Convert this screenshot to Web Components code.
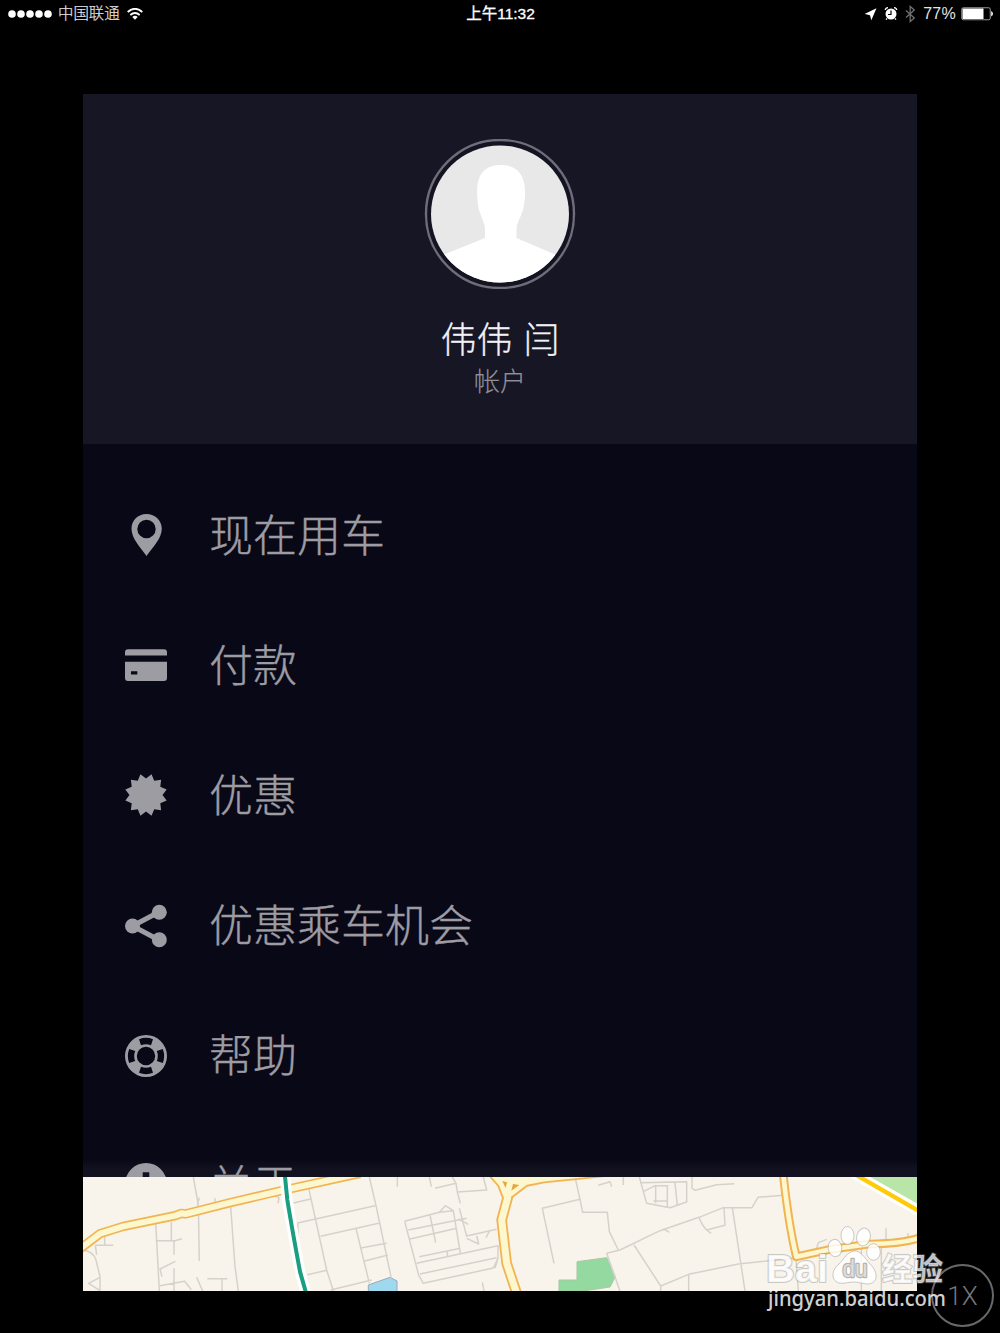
<!DOCTYPE html>
<html lang="zh-CN">
<head>
<meta charset="UTF-8">
<title>菜单</title>
<style>
  html, body { margin: 0; height: 100%; overflow: hidden; background: #000; }
  body { font-family: "Liberation Sans", "Noto Sans CJK SC", sans-serif; }
</style>
</head>
<body>
<side-app></side-app>

<script>
const icons = {
  pin: `<path fill-rule="evenodd" d="M21.500 0C12.800 0 6.500 6.500 6.500 14.800C6.500 24.500 15.500 33.500 21.500 42C27.500 33.500 36.800 24.500 36.800 14.800C36.800 6.500 30.200 0 21.500 0ZM21.500 5.800A9.200 9.200 0 1 1 21.500 24.200A9.200 9.200 0 1 1 21.500 5.800Z"/>`,
  card: `<path fill-rule="evenodd" d="M0 11.500V8.200Q0 5.300 3 5.300H39Q42 5.300 42 8.200V11.500ZM0 17.800H42V34Q42 37 39 37H3Q0 37 0 34ZM6 27.200V30.500H12.300V27.200Z"/>`,
  share: `<path d="M34 7L7.500 21L34 35" fill="none" stroke="currentColor" stroke-width="5"/><circle cx="7.500" cy="21" r="7.500"/><circle cx="34.300" cy="7.300" r="7.500"/><circle cx="34.300" cy="34.700" r="7.500"/>`,
  info: `<path fill-rule="evenodd" d="M21 -1A21 21 0 1 0 21 41A21 21 0 1 0 21 -1ZM17.700 8.300H24.300V13.800H17.700ZM17.700 17H24.300V32H17.700Z"/>`,
};

function burst(count) {
  return Array.from({ length: count * 2 }, (_, i) => {
    const r = i % 2 ? 21.4 : 16.5;
    const a = (i * Math.PI) / count;
    return `${(21 + r * Math.sin(a)).toFixed(2)},${(21 - r * Math.cos(a)).toFixed(2)}`;
  }).join(" ");
}

icons.badge = `<polygon points="${burst(12)}"/>`;

// life ring: a disc, a hole and four curved windows
icons.ring = `
  <path fill-rule="evenodd" d="M21 0A21 21 0 1 0 21 42A21 21 0 1 0 21 0ZM21 11.800A9.200 9.200 0 1 1 21 30.200A9.200 9.200 0 1 1 21 11.800Z"/>
  <g fill="var(--menu-bg)">${[0, 90, 180, 270].map((a) =>
    `<path transform="rotate(${a} 21 21)" d="M14 4.200Q21 1.500 28 4.200L26 10.200Q21 8.200 16 10.200Z"/>`).join("")}</g>`;

class BaseElement extends HTMLElement {
  connectedCallback() {
    if (!this.shadowRoot) this.attachShadow({ mode: "open" });
    this.shadowRoot.innerHTML = `<style>${this.css()}</style>${this.html()}`;
  }
}

class StatusBar extends BaseElement {
  css = () => /*css*/ `
    :host {
      display: grid;
      grid-template-columns: 1fr auto 1fr;
      align-items: center;
      height: 27px;
      padding: 0 7px 0 8px;
      color: #e4e4e4;
      font-size: 15.5px;
      line-height: 27px;
      white-space: nowrap;
    }
    div { display: flex; align-items: center; }
    svg { display: block; }
    .carrier { margin: 0 7px 0 6px; font-size: 15.4px; font-weight: 300; -webkit-text-stroke: .2px; }
    .time { font-size: 15.5px; font-weight: 400; color: #fff; -webkit-text-stroke: .3px #fff; }
    .right { justify-content: flex-end; }
    .percent { margin: 0 5px 0 7px; font-size: 16px; letter-spacing: .25px; }
  `;
  html = () => /*html*/ `
    <div>
      <svg width="44" height="8" fill="#fff"><circle cx="4" cy="4" r="3.800"/><circle cx="13" cy="4" r="3.800"/><circle cx="22" cy="4" r="3.800"/><circle cx="31" cy="4" r="3.800"/><circle cx="40" cy="4" r="3.800"/></svg>
      <span class="carrier">中国联通</span>
      <svg width="16" height="12" viewBox="0 0 16 12" fill="none" stroke="#fff" stroke-width="1.900"><path d="M.700 4Q8-2.300 15.300 4M3.300 7Q8 2.900 12.700 7"/><path d="M5.300 9Q8 6.600 10.700 9L8 11.800Z" fill="#fff" stroke="none"/></svg>
    </div>
    <div class="time">上午11:32</div>
    <div class="right">
      <svg width="51" height="18" viewBox="0 0 51 18">
        <path d="M11.500 3.200L-.500 9L5 10.200L6.300 15.200Z" fill="#fff"/>
        <circle cx="26" cy="9" r="5.500" fill="#fff"/>
        <path d="M20.300 5Q20.500 3 23 2.700M29 2.700Q31.500 3 31.700 5M22 13.500L21 14.700M30 13.500L31 14.700" stroke="#fff" stroke-width="1.300" fill="none"/>
        <path d="M26 5.500V9.500H23" fill="none" stroke="#000" stroke-width="1.200"/>
        <path d="M41 5.500L49.300 13L45.200 16.500V1.500L49.300 5L41 12.500" fill="none" stroke="#707070" stroke-width="1.300"/>
      </svg>
      <span class="percent">77%</span>
      <svg width="32" height="14" viewBox="0 0 32 14"><rect x=".750" y=".750" width="28.500" height="12" rx="1.500" fill="none" stroke="#999"/><rect x="1.500" y="1.500" width="21" height="10.500" fill="#fff"/><path d="M30.200 4Q32 5 32 6.800T30.200 9.600Z" fill="#fff"/></svg>
    </div>
  `;
}

class ProfileHeader extends BaseElement {
  css = () => /*css*/ `
    :host {
      display: flex;
      flex-direction: column;
      align-items: center;
      box-sizing: border-box;
      height: 350px;
      padding-top: 45px;
      background: #171625;
    }
    svg { display: block; }
    .name { margin-top: 22px; font: 300 36px/52px "Noto Sans CJK SC", sans-serif; word-spacing: 3px; color: #f2f2f4; -webkit-text-stroke: .3px; }
    .account { margin-top: -1px; font: 300 26px/36px "Noto Sans CJK SC", sans-serif; color: #908f99; -webkit-text-stroke: .2px; }
  `;
  html = () => /*html*/ `
    <svg width="152" height="150" viewBox="0 0 152 150">
      <clipPath id="face"><ellipse cx="76" cy="75" rx="69" ry="68.500"/></clipPath>
      <circle cx="76" cy="75" r="74" fill="#141322" stroke="#6e6d78" stroke-width="2.400"/>
      <g clip-path="url(#face)">
        <path fill="#e8e8e8" d="M0 0H152V150H0Z"/>
        <path fill="#fff" d="M61 99V91C61 83 57 79 54.500 69C50.500 45 54 26 76.500 26C100 26 104 46 99.500 69C97 79 92.500 83 92.500 91V99L131 115.500V150H20V115.500Z"/>
      </g>
    </svg>
    <div class="name"><slot name="name"></slot></div>
    <div class="account"><slot name="account"></slot></div>
  `;
}

class MenuItem extends BaseElement {
  css = () => /*css*/ `
    :host {
      display: flex;
      align-items: center;
      gap: 42px;
      height: 130.200px;
      padding-left: 42px;
      color: #9d9ca3;
      font: 300 44px/64px "Noto Sans CJK SC", sans-serif;
    }
    svg { flex: none; overflow: visible; }
    span { padding-bottom: 5px; -webkit-text-stroke: .4px; }
  `;
  html = () => /*html*/ `
    <svg width="42" height="42" viewBox="0 0 42 42" fill="currentColor">${icons[this.getAttribute("icon")]}</svg>
    <span><slot></slot></span>
  `;
}

class MenuList extends BaseElement {
  css = () => /*css*/ `
    :host {
      --menu-bg: #090817;
      display: block;
      box-sizing: border-box;
      height: 733px;
      padding-top: 26px;
      overflow: hidden;
      background: linear-gradient(transparent 715px, #12111f 725px), var(--menu-bg);
    }
    ::slotted(:last-child) { margin-top: -1px; }
  `;
  html = () => `<slot></slot>`;
}

class StreetMap extends BaseElement {
  css = () => /*css*/ `
    :host { display: block; height: 114px; background: #f8f4ec; }
    svg { display: block; }
  `;
  html = () => /*html*/ `
    <svg width="834" height="114" viewBox="9 81 2502 342" fill="none" stroke-linejoin="round">
      <g id="areas">
        <path d="M865 405L930 382L951 393V430H865Z" fill="#9fd9f0" stroke="#98aaba" stroke-width="3"/>
        <path d="M1437 423V390H1491V335L1580 323L1606 380L1590 411L1510 423Z" fill="#94daa0" stroke="#a5c9a0" stroke-width="3"/>
        <path d="M2370 81H2511V160Z" fill="#b9e5a9"/>
      </g>
      <g stroke="#d5d2cb" stroke-width="4.500">
        <path d="M340 81L355 165L358 333M227 215L238 423M274 215V272M227 272H285L306 266M282 272V314M452 170L465 350L475 423M74 258V286M46 286H100M10 300Q40 305 48 330L60 380V423M46 286L50 314M60 382L26 400L60 422M286 334L240 357L246 380M282 355V423M240 407L314 394L334 419M350 382L368 423M382 386H442M426 386V423M405 145V156M358 143L352 165M580 136L597 143L594 160"/>
        <path d="M685 110L740 360L760 423M640 159L692 147M655 265L653 219L885 167M722 259L896 220M868 81L888 167L934 385M828 235L868 400M842 294L920 280M854 333L924 315M682 374L740 361M752 420L875 390"/>
        <path d="M952 81V110M1048 81L1054 110M1065 115L1128 100L1117 81M1128 100L1132 126L1220 120L1210 81M1132 126L1141 160M974 214L1078 187L1120 182L1141 310M974 214L1016 375L1030 400L1240 354L1254 325M985 240L1160 205M990 267L1130 235M1050 195L1067 278M1078 187L1096 167L1120 182M1138 175L1160 258L1250 238M1135 207L1165 223M1160 265L1196 282L1190 258M1230 240L1218 263M1018 320L1141 295M1010 340L1254 287L1254 325L1245 354M1020 372L1250 323M1102 302V320M1207 397L1212 423"/>
        <path d="M1422 340L1387 175L1500 148L1487 90M1500 148L1508 187H1582L1588 245L1615 300M1555 106L1590 95L1595 110M1630 81V105M1678 81L1700 160L1770 173L1820 156V95L1680 98M1690 125L1725 107H1765M1727 107V160M1762 107V173M1785 98L1792 168M1720 153H1762M1580 310L1620 300L1740 242L1857 202L1930 173H2016L2034 142L2110 136M1580 310L1620 423M1662 285L1742 408L1826 373L1975 342L2140 325M1826 373V423M1742 408V423M1836 81V115L1846 121L1910 104L1963 101M1857 202Q1865 225 1880 240L1935 226L1932 173M1750 236L1768 247M1880 240L1893 250M1957 173L1995 423M2148 325L2155 423M2210 295L2215 278L2240 268M2418 235V270M2484 250V275M2404 290V423M2344 285V423"/>
      </g>
      <g stroke="#f1b451" stroke-width="28"><path d="M-10 304L60 251L130 229L286 197L304 190L316 192L450 158L600 123L840 70"/><path d="M1235 65L1266 100L1283 143L1265 210L1280 340L1310 430M1283 135L1335 95L1390 84L1480 75L1600 62" stroke-width="32"/><path d="M2109 65Q2125 220 2149 320L2245 299L2370 282Q2470 281 2520 263" stroke-width="26"/></g>
      <g stroke="#fdf7cf" stroke-width="18"><path d="M-10 304L60 251L130 229L286 197L304 190L316 192L450 158L600 123L840 70"/><path d="M1235 65L1266 100L1283 143L1265 210L1280 340L1310 430M1283 135L1335 95L1390 84L1480 75L1600 62" stroke-width="21"/><path d="M2109 65Q2125 220 2149 320L2245 299L2370 282Q2470 281 2520 263" stroke-width="14"/></g>
      <path d="M1245 78L1272 122L1290 132L1320 112L1345 98L1400 84V78Z" fill="#fdf7cf"/>
      <path d="M1267 93L1281 97L1277 114ZM1299 102L1318 105L1294 122Z" fill="#e9a53b"/>
      <path d="M613 60L622 150Q635 230 660 365L680 435" stroke="#fff" stroke-width="32"/>
      <path d="M613 60L622 150Q635 230 660 365L680 435" stroke="#199f80" stroke-width="12"/>
      <path d="M2320 70L2525 188" stroke="#fff" stroke-width="31"/>
      <path d="M2320 70L2525 188" stroke="#ffcb08" stroke-width="13"/>
    </svg>
  `;
}

class ZoomBadge extends BaseElement {
  css = () => /*css*/ `
    :host {
      position: absolute;
      left: 931px;
      top: 1264px;
      display: grid;
      place-items: center;
      box-sizing: border-box;
      width: 63px;
      height: 63px;
      border: 2px solid #68676c;
      border-radius: 50%;
      color: #77767a;
      font: 300 26px/1 Roboto, sans-serif;
    }
  `;
  html = () => `<span><slot></slot></span>`;
}

class PawWatermark extends BaseElement {
  css = () => /*css*/ `
    :host { position: absolute; left: 760px; top: 1220px; display: block; }
    svg { display: block; }
    text { paint-order: stroke; stroke: rgba(130, 130, 130, .4); stroke-width: 2px; stroke-linejoin: round; }
    .url { stroke: none; }
  `;
  html = () => /*html*/ `
    <svg width="195" height="100" viewBox="760 1220 195 100" fill="#fff" fill-opacity=".84">
      <text x="766" y="1282" font-family="Liberation Sans" font-weight="700" font-size="39" textLength="62" lengthAdjust="spacingAndGlyphs">Bai</text>
      <g stroke="#999" stroke-opacity=".5">
        <ellipse cx="847.500" cy="1235.500" rx="6.500" ry="9"/><ellipse cx="863.500" cy="1237" rx="6.800" ry="9" transform="rotate(12 863.500 1237)"/>
        <ellipse cx="835" cy="1248" rx="6.800" ry="8.700" transform="rotate(-8 835 1248)"/><ellipse cx="873.500" cy="1252" rx="6.800" ry="8.300"/>
        <path d="M854 1251C860 1250 865 1258 870 1264C877 1270 880 1283 868 1284C862 1284 860 1282 854 1282S845 1284 839 1283C830 1280 832 1269 839 1264C844 1259 847 1252 854 1251Z"/>
      </g>
      <text x="842.500" y="1277" font-family="Liberation Sans" font-size="23" textLength="25" lengthAdjust="spacingAndGlyphs" style="fill:#e9e8e5;stroke:#b5b4b1;stroke-width:2.500px">du</text>
      <text x="882" y="1280" font-family="Noto Sans CJK SC" font-weight="700" font-size="31" textLength="61" lengthAdjust="spacingAndGlyphs" fill-opacity=".76">经验</text>
      <text class="url" x="768" y="1305.500" font-family="Noto Sans" font-weight="500" font-size="21" textLength="178" lengthAdjust="spacingAndGlyphs">jingyan.baidu.com</text>
    </svg>
  `;
}

class SideApp extends BaseElement {
  css = () => /*css*/ `
    :host { display: block; height: 1333px; background: #000; }
    main { display: flex; flex-direction: column; margin: 67px 83px 0; }
  `;
  html = () => /*html*/ `
    <status-bar></status-bar>
    <main>
      <profile-header>
        <span slot="name">伟伟 闫</span>
        <span slot="account">帐户</span>
      </profile-header>
      <menu-list>
        <menu-item icon="pin">现在用车</menu-item>
        <menu-item icon="card">付款</menu-item>
        <menu-item icon="badge">优惠</menu-item>
        <menu-item icon="share">优惠乘车机会</menu-item>
        <menu-item icon="ring">帮助</menu-item>
        <menu-item icon="info">关于</menu-item>
      </menu-list>
      <street-map></street-map>
    </main>
    <zoom-badge>1X</zoom-badge>
    <paw-watermark></paw-watermark>
  `;
}

customElements.define("status-bar", StatusBar);
customElements.define("profile-header", ProfileHeader);
customElements.define("menu-item", MenuItem);
customElements.define("menu-list", MenuList);
customElements.define("street-map", StreetMap);
customElements.define("zoom-badge", ZoomBadge);
customElements.define("paw-watermark", PawWatermark);
customElements.define("side-app", SideApp);
</script>
</body>
</html>
